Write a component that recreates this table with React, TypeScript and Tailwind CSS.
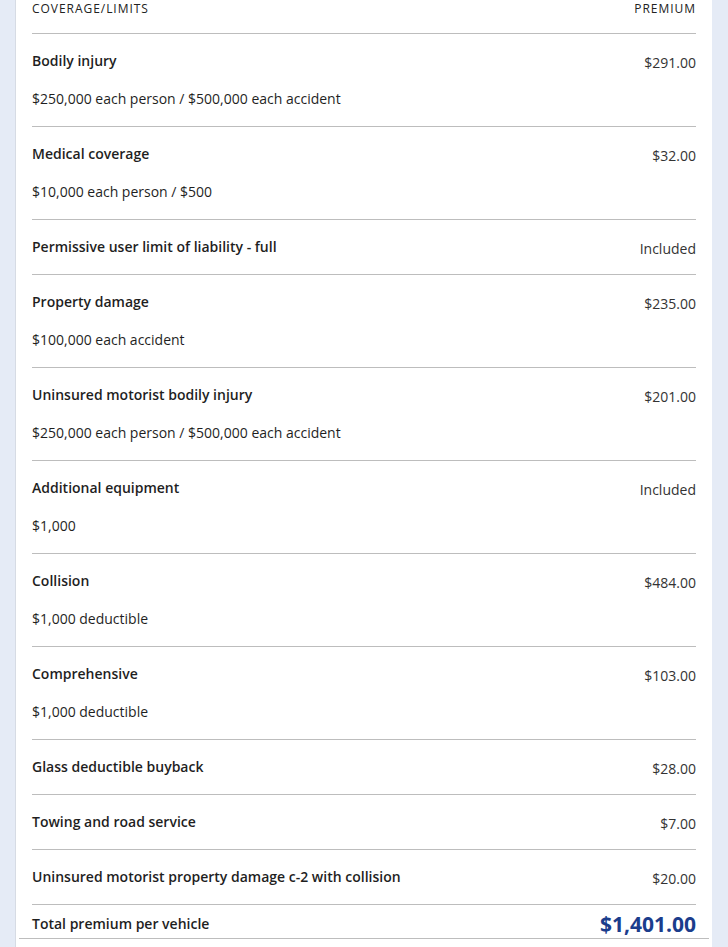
import React from "react";

type Row = { title: string; detail?: string; price: string };

const rows: Row[] = [
  { title: "Bodily injury", detail: "$250,000 each person / $500,000 each accident", price: "$291.00" },
  { title: "Medical coverage", detail: "$10,000 each person / $500", price: "$32.00" },
  { title: "Permissive user limit of liability - full", price: "Included" },
  { title: "Property damage", detail: "$100,000 each accident", price: "$235.00" },
  { title: "Uninsured motorist bodily injury", detail: "$250,000 each person / $500,000 each accident", price: "$201.00" },
  { title: "Additional equipment", detail: "$1,000", price: "Included" },
  { title: "Collision", detail: "$1,000 deductible", price: "$484.00" },
  { title: "Comprehensive", detail: "$1,000 deductible", price: "$103.00" },
  { title: "Glass deductible buyback", price: "$28.00" },
  { title: "Towing and road service", price: "$7.00" },
  { title: "Uninsured motorist property damage c-2 with collision", price: "$20.00" },
];

export default function App() {
  return (
    <div
      className="min-h-[947px] bg-[#e5ebf6] pl-[15px] pr-4 text-[#1f1f1f]"
      style={{ fontFamily: '"Open Sans", "Noto Sans", sans-serif' }}
    >
      <div className="min-h-[947px] bg-white border-l border-[#d6dbe4]">
        <div className="px-4">
          <div className="flex justify-between border-b border-[#bdbdbd] pb-[16px] text-[12px] leading-[17px] tracking-[0.08em] text-[#222]">
            <span>COVERAGE/LIMITS</span>
            <span>PREMIUM</span>
          </div>
          {rows.map((r) => (
            <div
              key={r.title}
              className="flex justify-between border-b border-[#bdbdbd] pt-[17px] pb-[17px] text-[14px] leading-[20px]"
            >
              <div className="flex flex-col gap-[18px]">
                <div className="font-semibold">{r.title}</div>
                {r.detail && <div>{r.detail}</div>}
              </div>
              <div className="translate-y-[2px] text-[#333]">{r.price}</div>
            </div>
          ))}
          <div className="flex items-center justify-between h-[33px] pt-[4px] text-[14px]">
            <span className="font-semibold">Total premium per vehicle</span>
            <span className="text-[21px] font-bold text-[#1b3d8c] leading-[28px]">$1,401.00</span>
          </div>
        </div>
        <div className="mx-[3px] border-t border-[#bdbdbd]" />
      </div>
    </div>
  );
}
